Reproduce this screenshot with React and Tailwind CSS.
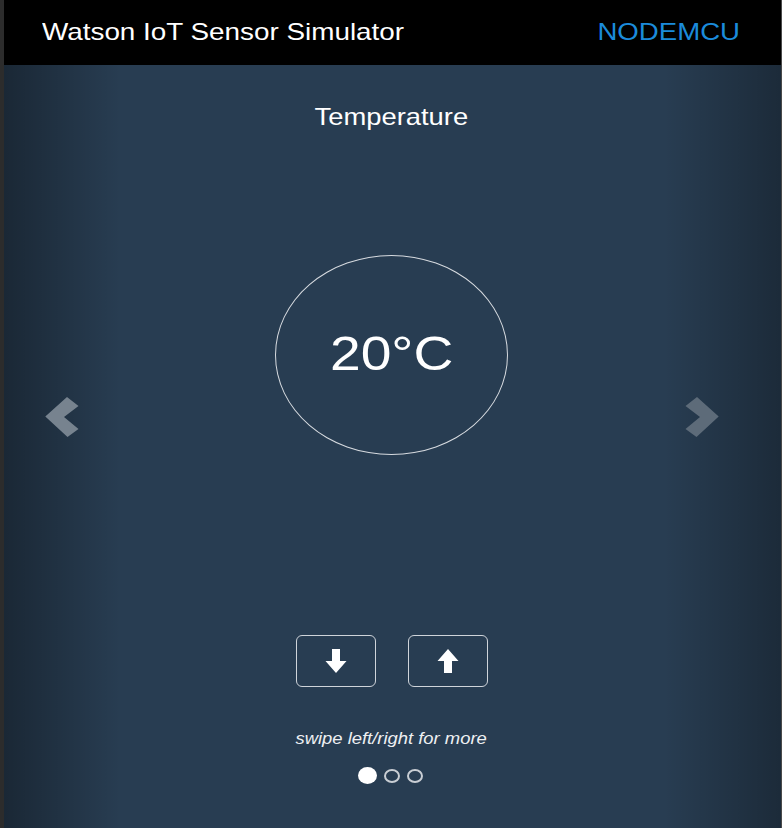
import React from 'react';

const font = { fontFamily: '"Liberation Sans", Arial, sans-serif' };

const ChevronLeft = () => (
  <svg width="38" height="44" viewBox="0 0 38 44">
    <polygon points="2.3,21.5 24,2 35.5,11 21,22 35.5,34 24.5,42" fill="#77838f" />
  </svg>
);

const ChevronRight = () => (
  <svg width="38" height="44" viewBox="0 0 38 44">
    <polygon points="35.7,21.5 14,2 2.5,11 17,22 2.5,34 13.5,42" fill="#5d6b79" />
  </svg>
);

const ArrowDown = () => (
  <svg width="22" height="24" viewBox="0 0 22 24">
    <polygon points="7,0 15,0 15,12 21.5,12 11,24 0.5,12 7,12" fill="#fff" />
  </svg>
);

const ArrowUp = () => (
  <svg width="22" height="24" viewBox="0 0 22 24">
    <polygon points="7,24 15,24 15,12 21.5,12 11,0 0.5,12 7,12" fill="#fff" />
  </svg>
);

export default function App() {
  return (
    <div className="w-[782px] h-[828px] flex flex-col bg-[#283d52] border-l-4 border-l-[#2c2c2c] border-r border-r-[#4a4a4a] overflow-hidden" style={font}>
      {/* Header */}
      <header className="h-[65px] shrink-0 bg-black flex items-center justify-between pl-[38px] pr-[41px] pb-[2px]">
        <span className="inline-block origin-left scale-x-[1.16] text-[24px] leading-[28px] text-white">
          Watson IoT Sensor Simulator
        </span>
        <span className="inline-block origin-right scale-x-[1.15] text-[24px] leading-[28px] text-[#1b8bdb]">
          NODEMCU
        </span>
      </header>

      {/* Carousel */}
      <div className="relative flex-1">
        <div className="absolute left-0 top-0 bottom-0 w-[15%] bg-gradient-to-r from-black/35 to-transparent" />
        <div className="absolute right-0 top-0 bottom-0 w-[15%] bg-gradient-to-l from-black/30 to-transparent" />
        <div className="absolute left-[39px] top-[330px]">
          <ChevronLeft />
        </div>
        <div className="absolute right-[60px] top-[330px]">
          <ChevronRight />
        </div>

        <div className="relative flex flex-col items-center pt-[38px] mr-[2px]">
          <span className="inline-block scale-x-[1.14] text-[24px] leading-[28px] text-white">Temperature</span>

          <div className="mt-[124px] w-[233px] h-[200px] rounded-[50%] border border-[#d6dadf] flex items-center justify-center">
            <span className="inline-block scale-x-[1.15] text-[48px] leading-[56px] text-white pb-[2px]">20°C</span>
          </div>

          <div className="mt-[180px] flex gap-[32px]">
            <button className="w-[80px] h-[52px] rounded-[6px] border border-[#cfd4da] flex items-center justify-center">
              <ArrowDown />
            </button>
            <button className="w-[80px] h-[52px] rounded-[6px] border border-[#cfd4da] flex items-center justify-center">
              <ArrowUp />
            </button>
          </div>

          <span className="mt-[43px] inline-block scale-x-[1.15] text-[16px] leading-[18px] italic text-[#eef0f2]">
            swipe left/right for more
          </span>

          <div className="mt-[19px] mr-[2px] flex items-center gap-[7px]">
            <span className="w-[19px] h-[17px] rounded-[50%] bg-white" />
            <span className="w-[16px] h-[14px] rounded-[50%] border-2 border-[#c9ced4]" />
            <span className="w-[16px] h-[14px] rounded-[50%] border-2 border-[#c9ced4]" />
          </div>
        </div>
      </div>
    </div>
  );
}
